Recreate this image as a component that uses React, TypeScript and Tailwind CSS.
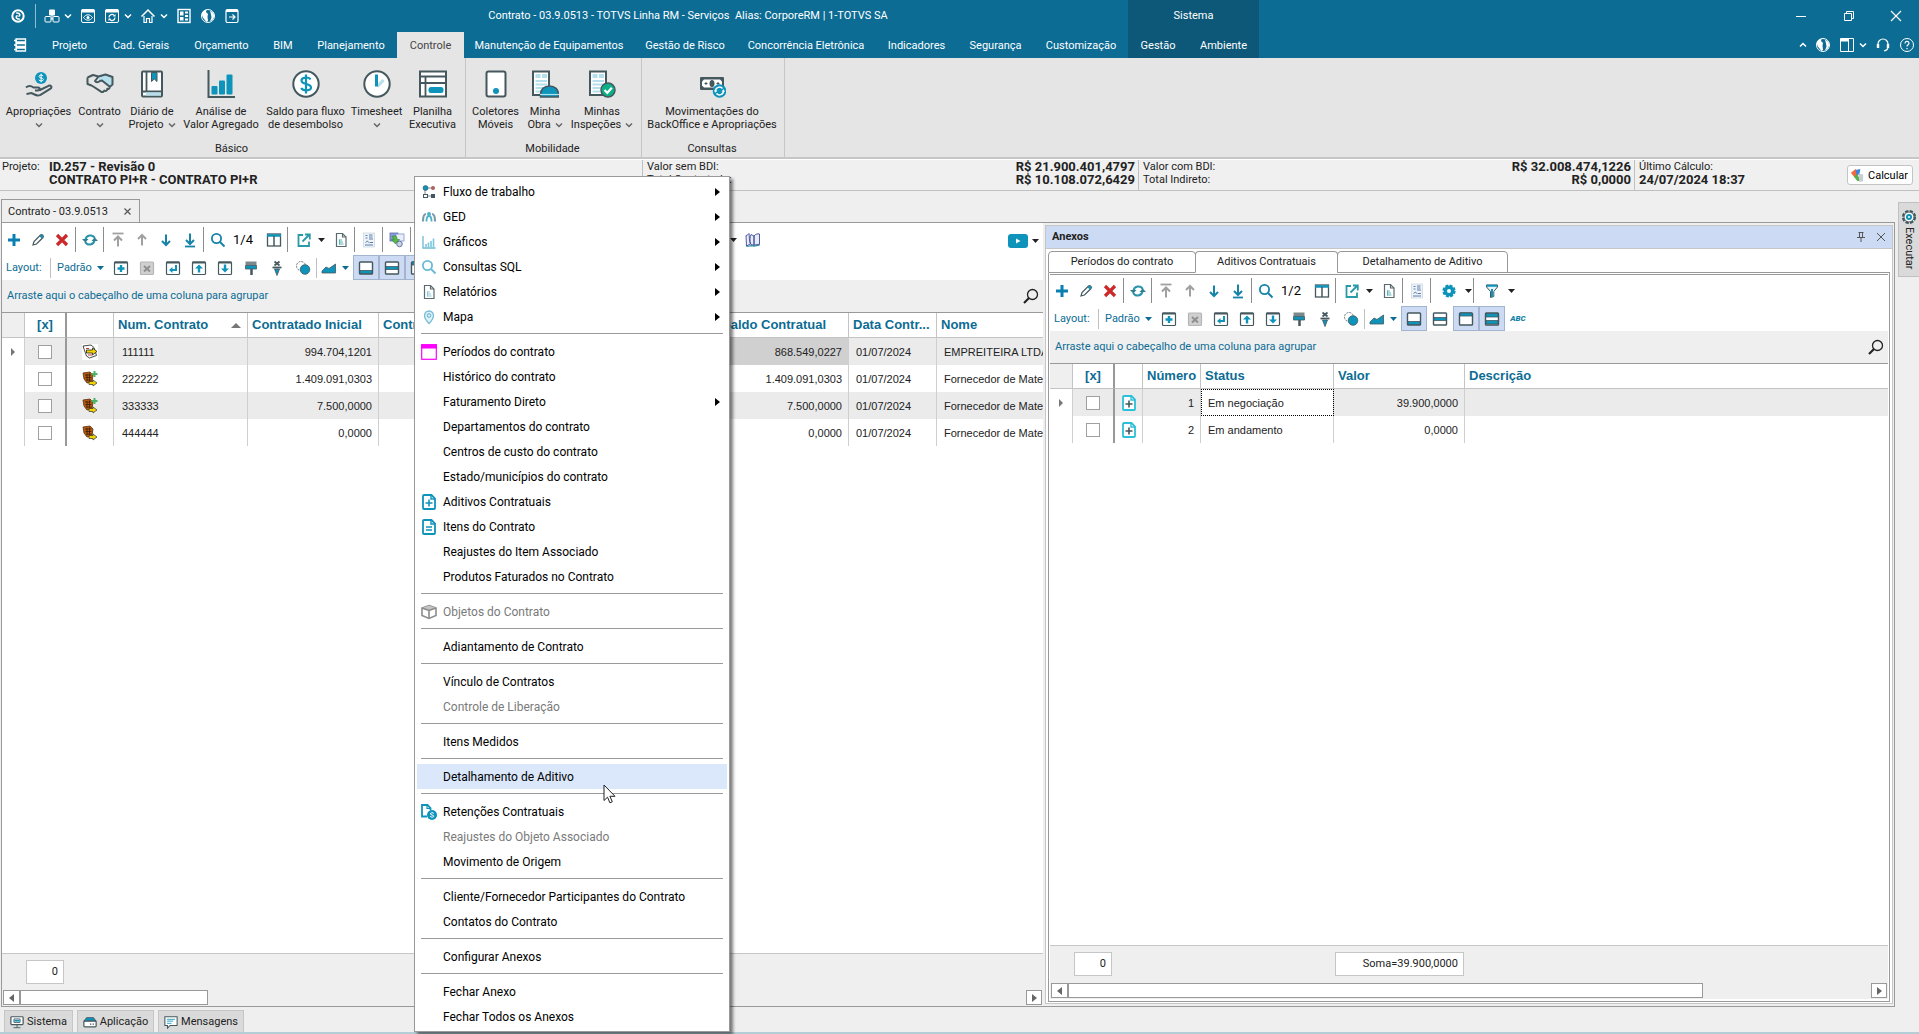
import type { ReactNode } from "react";
import clsx from "clsx";

const TEAL = "#0e93bb";
const DARK = "#44585e";
const GRAY = "#a0a0a0";

type SvgProps = { w?: number; h?: number; box?: string; children: ReactNode };

function Svg({ w = 16, h, box = "0 0 16 16", children }: SvgProps) {
  return (
    <svg width={w} height={h ?? w} viewBox={box} fill="none" className="shrink-0" aria-hidden="true">
      {children}
    </svg>
  );
}

/* ---------- Title bar icons ---------- */

const Chevron = ({ color = "#fff", up = false }: { color?: string; up?: boolean }) => (
  <Svg w={8} box="0 0 8 8">
    <path d={up ? "M1 5.5 4 2.5l3 3" : "M1 2.5 4 5.5l3-3"} stroke={color} strokeWidth="1.5" />
  </Svg>
);

const Caret = ({ color = "#222" }: { color?: string }) => (
  <Svg w={7} h={4} box="0 0 7 4">
    <path d="M0 0h7L3.5 4z" fill={color} />
  </Svg>
);

const LogoIcon = () => (
  <Svg>
    <circle cx="8" cy="8" r="5.7" stroke="#fff" strokeWidth="2" />
    <path d="M6.2 5.2c2-.8 3.6.6 3.6 1.8 0 .8-.6 1.3-1.5 1.3M9.800 10.800c-2 .8-3.600-.6-3.600-1.800 0-.8.6-1.300 1.500-1.300" stroke="#fff" strokeWidth="1.600" />
  </Svg>
);

const CubesIcon = () => (
  <Svg>
    <rect x="5" y="1.500" width="6" height="6" rx="1" fill="#fff" />
    <rect x="1" y="8.500" width="6" height="5.500" rx="1" stroke="#fff" />
    <rect x="9" y="8.500" width="6" height="5.500" rx="1" stroke="#fff" />
    <path d="M8 7v4M7 11h2" stroke="#fff" />
  </Svg>
);

const WindowFrame = ({ children }: { children: ReactNode }) => (
  <Svg>
    <rect x="1.500" y="1.500" width="13" height="13" rx="1.500" stroke="#fff" />
    <path d="M1.500 3h13" stroke="#fff" strokeWidth="3" />
    {children}
  </Svg>
);

const EyeWindowIcon = () => (
  <WindowFrame>
    <path d="M3.500 9.500c2.500-3.600 6.500-3.600 9 0-2.500 3.600-6.500 3.600-9 0z" stroke="#fff" />
    <circle cx="8" cy="9.500" r="1.500" fill="#fff" />
  </WindowFrame>
);

const RefreshWindowIcon = () => (
  <WindowFrame>
    <path d="M5 9.500a3 3 0 0 1 5.500-1.700M11 9.500a3 3 0 0 1-5.500 1.700" stroke="#fff" strokeWidth="1.200" />
    <path d="M9 8.500h2.500V6zM7 10.500H4.500V13z" fill="#fff" />
  </WindowFrame>
);

const HomeIcon = () => (
  <Svg>
    <path d="M1.500 8.500 8 2l6.500 6.500" stroke="#fff" strokeWidth="1.500" />
    <path d="M4 8v6.500h2.500v-4h3v4H12V8" stroke="#fff" strokeWidth="1.200" />
  </Svg>
);

const TilesIcon = () => (
  <Svg>
    <rect x="2" y="1.500" width="12" height="13" stroke="#fff" strokeWidth="1.400" />
    <path d="M4 3.500h3.500v4H4zM9 3.500h3v2H9zM9 7h3v2H9zM4 9h3.500v3.500H4zM9 10.500h3v2H9z" fill="#fff" />
  </Svg>
);

const GlobeIcon = () => (
  <Svg>
    <circle cx="8" cy="8" r="6.500" stroke="#fff" />
    <path d="M1.800 5c1-2 2.700-3 4.700-3.300L6 4l2 2-.5 2.500.5 4.500-1.500 1C5 12 1.500 9 1.800 5zM10 2.500 13.500 5c1.500 4-.5 7.500-3.500 8.500l1.500-4-.5-3z" fill="#fff" />
  </Svg>
);

const ExitIcon = () => (
  <Svg>
    <rect x="2" y="1.500" width="12" height="13" rx="1.500" stroke="#fff" strokeWidth="1.200" />
    <path d="M2 3h12" stroke="#fff" strokeWidth="2" />
    <path d="M5 9h6M8.500 6.500 11 9l-2.500 2.500" stroke="#fff" strokeWidth="1.200" />
  </Svg>
);

const MenuListIcon = () => (
  <Svg>
    <path d="M4 2h9.500v3H4zM4 6.500h9.500v3H4zM4 11h9.500v3H4z" stroke="#fff" strokeWidth="1.300" />
    <path d="M2 3.500h3M2 8h3M2 12.500h3" stroke="#fff" strokeWidth="1.300" />
  </Svg>
);

/* ---------- Ribbon icons (28px) ---------- */

const Big = ({ children }: { children: ReactNode }) => (
  <Svg w={28} box="0 0 28 28">{children}</Svg>
);

const HandCoinIcon = () => (
  <Big>
    <circle cx="16" cy="8" r="6" fill={TEAL} />
    <path d="M18.200 6c-.8-1.500-4.200-1.200-4.200.5 0 2 4.400 1 4.400 3 0 1.800-3.600 2-4.600.3M16.100 3.700v8.600" stroke="#fff" strokeWidth="1" />
    <path d="M1 17.500c3-2.500 5.500-1.500 7.500 0h4.500c2.500 0 2 3-.3 3H10M15 20l8.500-4.200c2.500-1 4 1.500 2 2.800L15.500 24.800c-2 1-4 .8-6-.3L6.500 23 1.500 24" stroke={DARK} strokeWidth="2" />
  </Big>
);

const HandshakeIcon = () => (
  <Big>
    <path d="M13 6.500 20 4.500l6.500 2.500v7l-3.500 2-7-5.500-3.500 1z" fill="#b5dfec" />
    <path d="M1.500 7.500 7 5l5.500 1.500 7-2 7 2.500v7.500L23.500 17M12.500 6.500 9 11c1 1.500 3 1.500 5 0l2-.5 7.500 6c.8 1.800-.8 2.800-2.200 2.200.3 2-1.500 2.800-3 1.800-.5 1.500-2 2-3.300 1.200L8 17l-2.500-1.500-4-1.500V7.500" stroke={DARK} strokeWidth="2" strokeLinejoin="round" />
  </Big>
);

const DiaryIcon = () => (
  <Big>
    <rect x="4" y="1.500" width="20" height="25" rx="1" fill="#fff" stroke={DARK} strokeWidth="2" />
    <path d="M8.500 2v19.500M4 21.500h20" stroke={DARK} strokeWidth="1.800" />
    <rect x="8" y="22.500" width="15" height="3" fill="#b5dfec" />
    <path d="M13.500 2.500h5.500v9l-2.700-2.500-2.800 2.500z" fill={TEAL} stroke={DARK} />
  </Big>
);

const BarsIcon = () => (
  <Big>
    <path d="M1.500 0v27H28" stroke={DARK} strokeWidth="2" />
    <rect x="4.500" y="16" width="6" height="8.500" rx="1" fill={TEAL} />
    <rect x="12" y="10.500" width="6" height="14" rx="1" fill={TEAL} />
    <rect x="19.500" y="4.500" width="6" height="20" rx="1" fill={TEAL} />
  </Big>
);

const DollarIcon = () => (
  <Big>
    <circle cx="14" cy="14" r="12.700" fill="#fff" stroke={DARK} strokeWidth="2" />
    <path d="M18.500 9.500c-1.500-3-9-2.500-9 1 0 4.500 9.500 2.500 9.500 7 0 3.500-8 4-9.800.5M14 4.500v19" stroke={TEAL} strokeWidth="2.200" />
  </Big>
);

const ClockIcon = () => (
  <Big>
    <circle cx="14" cy="14" r="12.700" fill="#fff" stroke={DARK} strokeWidth="2" />
    <path d="M14.500 16.500 20.500 10" stroke="#b5dfec" strokeWidth="3" />
    <path d="M13.500 4.500v12" stroke={TEAL} strokeWidth="3" />
  </Big>
);

const SheetIcon = () => (
  <Big>
    <rect x="1" y="1.500" width="26" height="25" fill="#fff" stroke={DARK} strokeWidth="2" />
    <path d="M1 6.500h26M1 13h26M6.500 6v20" stroke={DARK} strokeWidth="1.800" />
    <rect x="9.500" y="17" width="15" height="6" rx="2.500" fill={TEAL} />
  </Big>
);

const DeviceIcon = () => (
  <Big>
    <rect x="4.500" y="1.500" width="19" height="25" rx="2" fill="#fff" stroke={DARK} strokeWidth="2" />
    <circle cx="14" cy="21" r="3" fill={TEAL} />
  </Big>
);

const ReportBase = () => (
  <>
    <path d="M2 1.500h16V25H2z" fill="#fff" stroke={DARK} strokeWidth="2" />
    <path d="M4.500 4h5v4h-5zM11 4h5v4h-5z" fill="#b5dfec" />
    <path d="M4.500 11h11.500M4.500 14.500h11.500M4.500 18h9M4.500 21.500h8" stroke="#b5dfec" strokeWidth="1.800" />
  </>
);

const HelmetIcon = () => (
  <Big>
    <ReportBase />
    <path d="M9.500 24.500c0-5 3.500-8.500 9-8.500s9 3.500 9 8.500v2.500h-18z" fill={TEAL} stroke={DARK} strokeWidth="1.500" />
    <path d="M9 24.500h19" stroke="#b5dfec" strokeWidth="1.200" />
  </Big>
);

const InspectIcon = () => (
  <Big>
    <ReportBase />
    <circle cx="20" cy="20" r="7" fill="#0cb087" stroke={DARK} strokeWidth="1.500" />
    <path d="m16.500 20 2.800 2.800 4.500-5" stroke="#fff" strokeWidth="2.200" />
  </Big>
);

const CashIcon = () => (
  <Big>
    <rect x="2" y="7" width="24" height="13" rx="1" fill={DARK} />
    <path d="M6 9.500h16l2 2v4l-2 2H6l-2-2v-4z" fill="#fff" />
    <ellipse cx="14" cy="13.500" rx="2.500" ry="3.500" fill={DARK} />
    <path d="M6.500 13.500h3M8 12v3M18.500 13.500h3M20 12v3" stroke={DARK} />
    <circle cx="21.500" cy="21" r="6.800" fill={TEAL} />
    <path d="M17.500 21a4 4 0 0 1 7-2.500M25.500 21a4 4 0 0 1-7 2.500" stroke="#fff" strokeWidth="1.500" />
    <path d="M15.800 20.500h3.600l-1.800 2.300zM23.600 21.500h3.600l-1.800-2.300z" fill="#fff" />
  </Big>
);

/* ---------- Toolbar icons ---------- */

const PlusIcon = () => (
  <Svg>
    <path d="M8 2v12M2 8h12" stroke="#0b7fb0" strokeWidth="3" />
  </Svg>
);

const PencilIcon = () => (
  <Svg>
    <path d="m3 13 1-3.500L10.500 3c1.500-1.200 3.700 1 2.500 2.500L6.500 12z" stroke={DARK} strokeWidth="1.200" />
    <path d="m10.500 3.500 2.200 2.200" stroke={TEAL} strokeWidth="2.500" />
  </Svg>
);

const DeleteIcon = () => (
  <Svg>
    <path d="m3 3 10 10M13 3 3 13" stroke="#cc2a2a" strokeWidth="3.200" />
  </Svg>
);

const RefreshIcon = () => (
  <Svg>
    <path d="M3.500 7.500a5 5 0 0 1 9.300-1.500M12.500 8.500a5 5 0 0 1-9.300 1.500" stroke="#2b93ab" strokeWidth="2" />
    <path d="M0 7h6.500l-3.200 3.500zM16 9H9.500l3.200-3.500z" fill="#2b7f8f" />
  </Svg>
);

const UpIcon = ({ bar = false }: { bar?: boolean }) => (
  <Svg>
    {bar && <path d="M2.500 1.500h11" stroke={GRAY} strokeWidth="1.800" />}
    <path d={bar ? "M8 14.500V5M4 8.500l4-4 4 4" : "M8 13.500V3.500M4 7l4-4 4 4"} stroke={GRAY} strokeWidth="2" />
  </Svg>
);

const DownIcon = ({ bar = false }: { bar?: boolean }) => (
  <Svg>
    {bar && <path d="M3 14.500h10" stroke="#1683a8" strokeWidth="1.800" />}
    <path d={bar ? "M8 1.500v10M4 8l4 4 4-4" : "M8 2.500v10M4 9l4 4 4-4"} stroke="#1683a8" strokeWidth="2" />
  </Svg>
);

const SearchIcon = ({ color = "#1683a8" }: { color?: string }) => (
  <Svg>
    <circle cx="6.500" cy="6.500" r="4.600" stroke={color} strokeWidth="1.800" />
    <path d="m10 10 4.500 4.500" stroke={color} strokeWidth="2" />
  </Svg>
);

const ColumnsIcon = () => (
  <Svg>
    <rect x="1.500" y="2" width="13" height="12" fill="#fff" stroke={DARK} strokeWidth="1.300" />
    <path d="M1 3.500h14" stroke={TEAL} strokeWidth="2.500" />
    <path d="M8 4v10" stroke={DARK} strokeWidth="1.500" />
  </Svg>
);

const ExportIcon = () => (
  <Svg>
    <path d="M7 3H2.500v11h10.500V9.500" stroke="#2b9aa8" strokeWidth="1.800" />
    <path d="M6.500 9.500 13.500 2.500M9 2.500h4.800v5" stroke="#2b9aa8" strokeWidth="1.800" />
  </Svg>
);

const DocIcon = ({ lines = "#5bb3b8" }: { lines?: string }) => (
  <Svg>
    <path d="M3.500 1.500h6l3.500 3.500v9.500H3.500z" fill="#fff" stroke="#5a6b70" strokeWidth="1.200" />
    <path d="M9.500 1.500V5H13" stroke="#5a6b70" strokeWidth="1.200" />
    <path d="M6 8h3M6 10h4M6 12h4.500M6.500 7.500v5" stroke={lines} />
  </Svg>
);

const ListDocIcon = () => (
  <Svg>
    <rect x="2.500" y="1" width="11" height="14" fill="#eef3f9" stroke="#cfd8e2" strokeWidth=".8" />
    <path d="M4.500 3.500h2M4.500 6h2M8 3h3.500M8 5h3.500M8 7h4M4.500 10.500l2-1.500 1 1.500M8.500 10.500h3.500M4 13h8" stroke="#5b7fae" />
  </Svg>
);

const ExchangeIcon = () => (
  <Svg>
    <rect x="1" y="1" width="8" height="8" fill="#8a9bd8" stroke="#5a6ab0" strokeWidth=".8" />
    <rect x="7" y="2" width="8" height="7" fill="#e9eefb" stroke="#7f95c8" strokeWidth=".8" />
    <path d="M3 4.500c2-1.500 5-1 5 2v1h2.500L6.500 12 2.500 7.500H5z" fill="#55b848" stroke="#2f8530" strokeWidth=".6" />
    <circle cx="10.500" cy="12" r="2.800" fill="#c9d2e6" stroke="#4f5f94" strokeWidth=".8" />
  </Svg>
);

const GearIcon = () => (
  <Svg>
    <circle cx="8" cy="8" r="5.400" fill={TEAL} stroke={TEAL} strokeWidth="2.400" strokeDasharray="2.800 1.440" />
    <circle cx="8" cy="8" r="2" fill="#fff" />
  </Svg>
);

const FilterIcon = () => (
  <Svg>
    <path d="M2.500 2h11v2L9.800 8.500v5L6.500 14.500v-6L2.500 4z" stroke={DARK} fill="#e9f5f9" />
    <path d="M2.500 2.700h11M8 6v8" stroke={TEAL} strokeWidth="2" />
  </Svg>
);

const BookIcon = () => (
  <Svg>
    <path d="M1 3.500c1.500 0 2-1 3-2 .5 3 0 7 1.500 10.500L1.500 14zM5.500 12C4.500 8.500 5 5 6 2.500L9 4v9.500zM9 4c1.500-2 3.500-2.500 5.500-2v10.500c-2-.3-4 0-5.500 1z" fill="#e8ebf8" stroke="#3d4a9a" strokeWidth=".9" />
    <path d="m1.500 14.500 5-.8 2.500.5 5.500-1" stroke="#2f8f9a" strokeWidth="1.200" />
  </Svg>
);

const BoxIcon = ({ children }: { children: ReactNode }) => (
  <Svg>
    <rect x="1.500" y="2" width="13" height="12.500" rx="1" fill="#fff" stroke={DARK} strokeWidth="1.200" />
    <path d="M1.500 2.500h13" stroke={DARK} strokeWidth="2" />
    {children}
  </Svg>
);

const AddLayoutIcon = () => <BoxIcon><path d="M8 5v7M4.500 8.500h7" stroke={TEAL} strokeWidth="2.400" /></BoxIcon>;
const EnterIcon = () => <BoxIcon><path d="M11 5v5H6" stroke={TEAL} strokeWidth="2" /><path d="M7.500 7v6L4 10z" fill={TEAL} /></BoxIcon>;
const UploadIcon = () => <BoxIcon><path d="M8 12.500V7" stroke={TEAL} strokeWidth="2.400" /><path d="M4 8.500 8 4.500l4 4z" fill={TEAL} /></BoxIcon>;
const DownloadIcon = () => <BoxIcon><path d="M8 4.500V9" stroke={TEAL} strokeWidth="2.400" /><path d="m4 8.500 4 4 4-4z" fill={TEAL} /></BoxIcon>;

const RemoveLayoutIcon = () => (
  <Svg>
    <rect x="1.500" y="2" width="13" height="12.500" rx="1" fill="#d0d0d0" stroke="#b5b5b5" strokeWidth="1.200" />
    <path d="m5 6 6 5.500M11 6l-6 5.500" stroke="#8f8f8f" strokeWidth="2" />
  </Svg>
);

const BrushIcon = () => (
  <Svg>
    <path d="M2.500 1.500h11v4h-11z" fill="#7b898d" />
    <path d="M2.500 5.500h11V9h-11z" fill={TEAL} stroke={DARK} strokeWidth=".8" />
    <path d="M8.500 9v6" stroke={DARK} strokeWidth="2.500" />
  </Svg>
);

const SwordIcon = () => (
  <Svg>
    <path d="m5.500 1.500 5 4M10.500 1.500l-5 4" stroke={DARK} strokeWidth="1.800" />
    <path d="M3.500 7.500h9" stroke={DARK} strokeWidth="1.800" />
    <path d="M5.500 9h5L8 15.500z" fill={TEAL} stroke={DARK} strokeWidth=".8" />
  </Svg>
);

const ShapesIcon = () => (
  <Svg>
    <circle cx="6" cy="6" r="4.500" stroke="#6b7a7f" strokeDasharray="2 1" />
    <circle cx="10" cy="9.500" r="4.800" fill={TEAL} stroke={DARK} strokeWidth=".8" />
  </Svg>
);

const AreaIcon = () => (
  <Svg>
    <path d="M1 13V11l4-4 3 1.500L14.500 4v9z" fill={TEAL} stroke={DARK} strokeWidth=".8" />
  </Svg>
);

const Panel = ({ fill }: { fill: string }) => (
  <Svg>
    <rect x="1.500" y="2" width="13" height="12" rx=".8" fill="#fff" stroke={DARK} strokeWidth="1.400" />
    <path d={fill} fill={TEAL} stroke={DARK} strokeWidth=".8" />
  </Svg>
);

const PANEL_BOTTOM = "M2 10.500h12v3H2z";
const PANEL_MIDDLE = "M2 6.500h12v3H2z";
const PANEL_TOP = "M2 2h12v3H2z";
const PANEL_BOTH = "M2 2.500h12v3.500H2zM2 9.500h12v3.500H2z";

/* ---------- Menu and grid icons ---------- */

const FlowIcon = () => (
  <Svg>
    <path d="M5 4h7M4 5v7h8" stroke="#7f8f94" />
    <circle cx="4.500" cy="4" r="2.500" fill={TEAL} stroke={DARK} strokeWidth=".6" />
    <circle cx="12" cy="4" r="2" fill="#a8645c" />
    <rect x="2.500" y="10.500" width="4" height="3" fill="#fff" stroke={DARK} />
    <rect x="10" y="10" width="4" height="4" fill={DARK} />
  </Svg>
);

const GedIcon = () => (
  <Svg>
    <path d="M2 12.500c0-4.500 1-7.500 3-7.500M14 12.500c0-4.500-1-7.500-3-7.500" stroke="#7a9ba6" strokeWidth="2.200" />
    <path d="M5.500 12.500c0-3 .8-5.500 2.500-5.500s2.500 2.500 2.500 5.500" stroke="#4fb0cb" strokeWidth="1.800" />
    <circle cx="8" cy="5" r="2" fill="#4fb0cb" />
  </Svg>
);

const ChartIcon = () => (
  <Svg>
    <path d="M2 2v12h12.500" stroke="#6cb9d2" strokeWidth="1.300" />
    <path d="M5 13v-3M7.500 13V8.500M10 13V7M12.500 13V4.500" stroke="#7cc6dc" strokeWidth="1.600" />
  </Svg>
);

const PinIcon = () => (
  <Svg>
    <path d="M8 14.500C5 11.500 3.500 9 3.500 6.500a4.500 4.500 0 0 1 9 0c0 2.500-1.500 5-4.500 8z" fill="#dff1f8" stroke="#76bcd4" strokeWidth="1.300" />
    <circle cx="8" cy="6.500" r="1.800" stroke="#5aaecb" />
  </Svg>
);

const PeriodIcon = () => (
  <Svg>
    <rect x=".7" y=".7" width="14.600" height="14.600" fill="#fff" stroke="#ff00ff" strokeWidth="1.200" />
    <path d="M0 2.500h16" stroke="#ff00ff" strokeWidth="4" />
  </Svg>
);

const PageIcon = ({ d, tone = TEAL, mark = TEAL }: { d: string; tone?: string; mark?: string }) => (
  <Svg>
    <path d="M3 1h7.500L14 4.500V14a1 1 0 0 1-1 1H3a1 1 0 0 1-1-1V2a1 1 0 0 1 1-1z" fill="#fff" stroke={tone} strokeWidth="1.800" />
    <path d="M10 1v4h4" stroke={tone} strokeWidth="1.400" />
    <path d={d} stroke={mark} strokeWidth="1.600" />
  </Svg>
);

const PAGE_PLUS = "M8 5.500v7M4.500 9h7";
const PAGE_LINES = "M5 8h6M5 11h6";

const ObjectIcon = () => (
  <Svg>
    <path d="M8 1.500 15 4v7.500L8 14.500 1 11.500V4z" fill="#fff" stroke="#8c8c8c" strokeWidth="1.600" />
    <path d="M1 4l7-2.500L15 4 8 6.500z" fill="#c4c4c4" />
    <path d="M1 4l7 2.500L15 4M8 6.500v8" stroke="#8c8c8c" strokeWidth="1.600" />
  </Svg>
);

const RetentionIcon = () => (
  <Svg>
    <path d="M6 12.500H1V1h5.500L9.500 4v2" stroke={TEAL} strokeWidth="1.800" />
    <path d="M6 1v3.500h3.500" stroke={TEAL} strokeWidth="1.200" />
    <circle cx="11" cy="11" r="5" fill={TEAL} />
    <path d="M12.800 9.500c-.6-1.200-3.400-1-3.400.4 0 1.600 3.400.7 3.400 2.200 0 1.400-3 1.500-3.600.2" stroke="#fff" />
  </Svg>
);

const NegotiatingIcon = () => (
  <Svg>
    <rect width="16" height="16" fill="#fff" />
    <path d="m1 2 8-1 3 2.500 2.500 8-7 2.500L4.500 12z" fill="#fff" stroke="#333" strokeWidth=".9" />
    <path d="M4 4.500h3M6 11h4" stroke="#c0392b" />
    <path d="M4.500 6h6V4l4.500 3.500-4.500 3.500V9h-6z" fill="#f3d400" stroke="#222" strokeWidth=".8" />
  </Svg>
);

const ContractIcon = ({ added }: { added: boolean }) => (
  <Svg>
    <path d="m1 2 7-1 3 3-1 7-5 1-3-4z" fill="#b45a12" stroke="#5a2c08" strokeWidth=".8" />
    <path d="M3 4h6M3.500 6.500h6M4.500 9h5M5 3v7M7.500 2.500v8" stroke="#3c1c04" strokeWidth=".8" />
    <path d="M7 10.500h4V9l4 3-4 3v-1.500H7z" fill="#f3d400" stroke="#333" strokeWidth=".7" />
    {added && <path d="M12.500 0v6M9.500 3h6" stroke="#4db36b" strokeWidth="2" />}
  </Svg>
);

/* ---------- Ribbon ---------- */

const tabs: [string, string][] = [
  ["Projeto", "w-[61px]"],
  ["Cad. Gerais", "w-[82px]"],
  ["Orçamento", "w-[79px]"],
  ["BIM", "w-[44px]"],
  ["Planejamento", "w-[92px]"],
  ["Controle", "w-[67px]"],
  ["Manutenção de Equipamentos", "w-[170px]"],
  ["Gestão de Risco", "w-[102px]"],
  ["Concorrência Eletrônica", "w-[140px]"],
  ["Indicadores", "w-[81px]"],
  ["Segurança", "w-[77px]"],
  ["Customização", "w-[94px]"],
];

function TitleButton({ label, children, className = "w-7" }: { label: string; children: ReactNode; className?: string }) {
  return (
    <button type="button" aria-label={label} className={clsx("flex h-full shrink-0 items-center justify-center gap-1", className)}>
      {children}
    </button>
  );
}

function TitleBar() {
  return (
    <header className="flex h-[58px] shrink-0 bg-[#0c6c94] text-white">
      <div className="flex w-[1128px] flex-col">
        <div className="flex h-8 items-center">
          <TitleButton label="TOTVS" className="w-[35px]"><LogoIcon /></TitleButton>
          <span className="mr-2 h-6 w-px bg-[#8fbdd0]" />
          <TitleButton label="Coligadas"><CubesIcon /><Chevron /></TitleButton>
          <TitleButton label="Visualizar" className="w-8"><EyeWindowIcon /></TitleButton>
          <TitleButton label="Atualizar" className="mr-2 w-7"><RefreshWindowIcon /><Chevron /></TitleButton>
          <TitleButton label="Início"><HomeIcon /><Chevron /></TitleButton>
          <TitleButton label="Painéis" className="w-8"><TilesIcon /></TitleButton>
          <TitleButton label="Portal" className="w-4"><GlobeIcon /></TitleButton>
          <TitleButton label="Sair" className="w-8"><ExitIcon /></TitleButton>
          <h1 className="flex-1 text-center whitespace-pre">
            {"Contrato - 03.9.0513 - TOTVS Linha RM - Serviços  Alias: CorporeRM | 1-TOTVS SA"}
          </h1>
        </div>
        <nav className="flex h-[26px]">
          <button type="button" aria-label="Menu" className="flex w-[39px] items-center justify-center"><MenuListIcon /></button>
          {tabs.map(([name, width]) => (
            <button
              key={name}
              type="button"
              className={clsx(width, "shrink-0 pt-px text-center whitespace-nowrap", name === "Controle" && "bg-[#e5e5e5] text-[#444]")}
            >
              {name}
            </button>
          ))}
        </nav>
      </div>
      <div className="flex w-[131px] flex-col bg-[#0d5878]">
        <div className="flex h-8 items-center justify-center">Sistema</div>
        <div className="flex h-[26px]">
          <button type="button" className="w-[60px] pt-px">Gestão</button>
          <button type="button" className="w-[71px] pt-px">Ambiente</button>
        </div>
      </div>
      <div className="flex flex-1 flex-col items-end">
        <div className="flex h-8">
          <TitleButton label="Minimizar" className="w-12">
            <Svg w={12} box="0 0 12 12"><path d="M1 6.500h10" stroke="#fff" /></Svg>
          </TitleButton>
          <TitleButton label="Restaurar" className="w-12">
            <Svg w={12} box="0 0 12 12"><path d="M1.500 3.500h7v7h-7zM3.500 3.500v-2h7v7h-2" stroke="#fff" /></Svg>
          </TitleButton>
          <TitleButton label="Fechar" className="w-[46px]">
            <Svg w={12} box="0 0 12 12"><path d="m1 1 10 10M11 1 1 11" stroke="#fff" strokeWidth="1.200" /></Svg>
          </TitleButton>
        </div>
        <div className="flex h-[26px] items-center">
          <TitleButton label="Recolher" className="mr-2 w-2"><Chevron up /></TitleButton>
          <TitleButton label="Portal" className="mr-2 w-4"><GlobeIcon /></TitleButton>
          <TitleButton label="Janelas" className="mr-1 w-7">
            <Svg>
              <path d="M1.500 1.500h13v13h-13zM9.500 2v12" stroke="#fff" />
              <path d="M2 3h8" stroke="#fff" strokeWidth="3" />
            </Svg>
            <Chevron />
          </TitleButton>
          <TitleButton label="Suporte" className="w-6">
            <Svg>
              <path d="M3 10V7a5 5 0 0 1 10 0v3c0 2-2 3.500-4 4" stroke="#fff" strokeWidth="1.200" />
              <path d="M3 7v4M13 7v4" stroke="#fff" strokeWidth="2.400" />
            </Svg>
          </TitleButton>
          <TitleButton label="Ajuda" className="w-6">
            <Svg>
              <circle cx="8" cy="8" r="6.500" stroke="#fff" />
              <path d="M6 6.500c0-3 4-2.500 4-.2 0 1.500-2 1.500-2 3.200M8 11v1.300" stroke="#fff" strokeWidth="1.200" />
            </Svg>
          </TitleButton>
        </div>
      </div>
    </header>
  );
}

type RibbonItem = { lines: [string, string?]; width: string; icon: ReactNode; chevron?: boolean };

const ribbon: { name: string; width: string; items: RibbonItem[] }[] = [
  {
    name: "Básico",
    width: "w-[466px]",
    items: [
      { lines: ["Apropriações"], width: "w-[70px]", icon: <HandCoinIcon />, chevron: true },
      { lines: ["Contrato"], width: "w-[52px]", icon: <HandshakeIcon />, chevron: true },
      { lines: ["Diário de", "Projeto"], width: "w-[53px]", icon: <DiaryIcon />, chevron: true },
      { lines: ["Análise de", "Valor Agregado"], width: "w-[85px]", icon: <BarsIcon /> },
      { lines: ["Saldo para fluxo", "de desembolso"], width: "w-[84px]", icon: <DollarIcon /> },
      { lines: ["Timesheet"], width: "w-[58px]", icon: <ClockIcon />, chevron: true },
      { lines: ["Planilha", "Executiva"], width: "w-[54px]", icon: <SheetIcon /> },
    ],
  },
  {
    name: "Mobilidade",
    width: "w-[176px]",
    items: [
      { lines: ["Coletores", "Móveis"], width: "w-[52px]", icon: <DeviceIcon /> },
      { lines: ["Minha", "Obra"], width: "w-[47px]", icon: <HelmetIcon />, chevron: true },
      { lines: ["Minhas", "Inspeções"], width: "w-[67px]", icon: <InspectIcon />, chevron: true },
    ],
  },
  {
    name: "Consultas",
    width: "w-[143px]",
    items: [{ lines: ["Movimentações do", "BackOffice e Apropriações"], width: "w-[132px]", icon: <CashIcon /> }],
  },
];

function Ribbon() {
  return (
    <div className="flex h-[101px] shrink-0 border-b-2 border-[#c6c6c6] bg-[#e5e5e5]">
      {ribbon.map((group) => (
        <section key={group.name} className={clsx(group.width, "flex flex-col border-r border-[#c6c6c6] pr-[2px]")}>
          <div className="flex h-[84px] justify-center">
            {group.items.map((item) => (
              <button
                key={item.lines[0]}
                type="button"
                className={clsx(item.width, "flex shrink-0 flex-col items-center pt-3 leading-[13px] whitespace-nowrap")}
              >
                <span className="mb-[7px]">{item.icon}</span>
                <span>{item.lines[0]}</span>
                <span className="flex h-[13px] items-center gap-1">
                  {item.lines[1]}
                  {item.chevron && <Chevron color="#666" />}
                </span>
              </button>
            ))}
          </div>
          <h2 className="text-center leading-[14px]">{group.name}</h2>
        </section>
      ))}
    </div>
  );
}

function Totals({ rows }: { rows: [string, string][] }) {
  return (
    <dl className="flex flex-col pr-[3px] pl-1">
      {rows.map(([label, value]) => (
        <div key={label} className="flex justify-between">
          <dt>{label}</dt>
          <dd className="text-[13px] font-bold">{value}</dd>
        </div>
      ))}
    </dl>
  );
}

function ProjectBar() {
  return (
    <div className="grid h-8 shrink-0 grid-cols-[643fr_496fr_496fr_284fr] divide-x divide-[#c0c0c0] border-y border-t-white border-b-[#c0c0c0] bg-[#f0f0f0] leading-[13px]">
      <div className="flex">
        <span className="w-[49px] pl-[2px]">Projeto:</span>
        <p className="text-[13px] font-bold">
          ID.257 - Revisão 0<br />CONTRATO PI+R - CONTRATO PI+R
        </p>
      </div>
      <Totals rows={[["Valor sem BDI:", "R$ 21.900.401,4797"], ["Total Contratado:", "R$ 10.108.072,6429"]]} />
      <Totals rows={[["Valor com BDI:", "R$ 32.008.474,1226"], ["Total Indireto:", "R$ 0,0000"]]} />
      <div className="flex items-start justify-between pr-[6px] pl-1">
        <div>
          <p>Último Cálculo:</p>
          <p className="text-[13px] font-bold">24/07/2024 18:37</p>
        </div>
        <button type="button" className="flex h-5 w-[66px] items-center gap-[3px] self-center rounded-[3px] border border-[#c4c4c4] bg-white pl-[2px] text-black">
          <Svg w={15}>
            <path d="m1 5 5-4 3 6-4 3z" fill="#f06a3a" />
            <path d="m6 2 5-1-1 6-3 1z" fill="#3b86d8" />
            <path d="m4 9 4-2 3 6-3 1z" fill="#57b04a" />
            <path d="m9 6 5 1v7l-4 1z" fill="#c7cdd4" />
          </Svg>
          Calcular
        </button>
      </div>
    </div>
  );
}

/* ---------- Grids ---------- */

const Tool = ({ label, children, className = "w-6" }: { label: string; children: ReactNode; className?: string }) => (
  <button type="button" aria-label={label} className={clsx(className, "flex shrink-0 items-center justify-center")}>
    {children}
  </button>
);

const Sep = () => <span className="mr-[2px] ml-px h-[25px] w-px shrink-0 bg-[#8c8c8c]" />;

function MainToolbar({ page, children }: { page: string; children: ReactNode }) {
  return (
    <div className="flex h-[31px] items-center overflow-hidden">
      <Tool label="Incluir"><PlusIcon /></Tool>
      <Tool label="Editar"><PencilIcon /></Tool>
      <Tool label="Excluir"><DeleteIcon /></Tool>
      <Sep />
      <Tool label="Atualizar"><RefreshIcon /></Tool>
      <Sep />
      <Tool label="Primeiro"><UpIcon bar /></Tool>
      <Tool label="Anterior"><UpIcon /></Tool>
      <Tool label="Próximo"><DownIcon /></Tool>
      <Tool label="Último"><DownIcon bar /></Tool>
      <Sep />
      <Tool label="Localizar"><SearchIcon /></Tool>
      <span className="w-8 shrink-0 pl-[3px] text-[13px] text-black">{page}</span>
      <Tool label="Colunas"><ColumnsIcon /></Tool>
      <Sep />
      <Tool label="Exportar" className="w-7"><ExportIcon /></Tool>
      <Caret />
      <Tool label="Documento" className="ml-1 w-6"><DocIcon /></Tool>
      <Sep />
      <Tool label="Relatório"><ListDocIcon /></Tool>
      <Sep />
      {children}
    </div>
  );
}

function LayoutToolbar({ pressed, children }: { pressed: boolean[]; children?: ReactNode }) {
  const panels: [string, string][] = [
    ["Rodapé", PANEL_BOTTOM],
    ["Linhas", PANEL_MIDDLE],
    ["Agrupamento", PANEL_TOP],
    ["Faixas", PANEL_BOTH],
  ];
  return (
    <div className="flex h-[25px] items-center overflow-hidden text-[#0c6c94]">
      <span className="w-12 shrink-0 pl-1">Layout:</span>
      <span className="h-5 w-px shrink-0 bg-[#c0c0c0]" />
      <button type="button" className="flex w-[57px] shrink-0 items-center gap-[5px] pl-[6px]">
        Padrão <Caret color="#0c6c94" />
      </button>
      <Tool label="Novo layout" className="w-[26px]"><AddLayoutIcon /></Tool>
      <Tool label="Excluir layout" className="w-[26px]"><RemoveLayoutIcon /></Tool>
      <Tool label="Restaurar layout" className="w-[26px]"><EnterIcon /></Tool>
      <Tool label="Exportar layout" className="w-[26px]"><UploadIcon /></Tool>
      <Tool label="Importar layout" className="w-[26px]"><DownloadIcon /></Tool>
      <Tool label="Formatar" className="w-[26px]"><BrushIcon /></Tool>
      <Tool label="Limpar formatação" className="w-[26px]"><SwordIcon /></Tool>
      <Tool label="Cores" className="w-[26px]"><ShapesIcon /></Tool>
      <span className="h-5 w-px shrink-0 bg-[#c0c0c0]" />
      <Tool label="Gráfico" className="w-[36px] gap-[5px]"><AreaIcon /><Caret color="#0c6c94" /></Tool>
      {panels.map(([label, fill], i) => (
        <Tool
          key={label}
          label={label}
          className={clsx("h-[25px] w-[26px]", pressed[i] && "border border-[#a3b4cf] bg-[#cddaf3]")}
        >
          <Panel fill={fill} />
        </Tool>
      ))}
      {children}
    </div>
  );
}

function GroupBand() {
  return (
    <div className="flex h-8 shrink-0 items-center justify-between bg-[#efefef] pr-1 pl-[5px] text-[#0c6c94]">
      <span>Arraste aqui o cabeçalho de uma coluna para agrupar</span>
      <button type="button" aria-label="Pesquisar">
        <Svg>
          <circle cx="9.500" cy="6.500" r="5" stroke="#222" strokeWidth="1.300" />
          <path d="M6 10 1 15" stroke="#222" strokeWidth="2.200" />
        </Svg>
      </button>
    </div>
  );
}

const th = "h-[25px] border-r border-b border-[#c4c4c4] px-1 text-[13px] font-bold whitespace-nowrap";
const td = "h-[27px] border-r border-[#cfcfcf] overflow-hidden whitespace-nowrap";

const Marker = () => (
  <Svg w={6} h={8} box="0 0 6 8"><path d="M1 0v8l4-4z" fill="#777" /></Svg>
);

function LeadHeaders() {
  return (
    <>
      <th className={clsx(th, "border-[#999] bg-[#efefef]")} />
      <th className={clsx(th, "border-r-2 border-r-[#999] text-center")}>[x]</th>
      <th className={th} />
    </>
  );
}

function LeadCells({ first, id, icon }: { first: boolean; id: string; icon: ReactNode }) {
  return (
    <>
      <td className={clsx(td, "bg-white")}>
        <span className="flex justify-center">{first && <Marker />}</span>
      </td>
      <td className={clsx(td, "border-r-2 border-r-[#999]")}>
        <input
          type="checkbox"
          aria-label={`Selecionar ${id}`}
          className="mx-auto block size-[14px] appearance-none border border-[#a0a0a0] bg-white"
        />
      </td>
      <td className={td}><span className="flex justify-center">{icon}</span></td>
    </>
  );
}

const contracts = [
  { num: "111111", inicial: "994.704,1201", saldo: "868.549,0227", data: "01/07/2024", nome: "EMPREITEIRA LTDA", icon: <NegotiatingIcon /> },
  { num: "222222", inicial: "1.409.091,0303", saldo: "1.409.091,0303", data: "01/07/2024", nome: "Fornecedor de Materi", icon: <ContractIcon added /> },
  { num: "333333", inicial: "7.500,0000", saldo: "7.500,0000", data: "01/07/2024", nome: "Fornecedor de Materi", icon: <ContractIcon added /> },
  { num: "444444", inicial: "0,0000", saldo: "0,0000", data: "01/07/2024", nome: "Fornecedor de Materi", icon: <ContractIcon added={false} /> },
];

function ContractTable() {
  return (
    <table className="w-full table-fixed border-separate border-spacing-0 border-t border-[#999] font-['Liberation_Sans',sans-serif]">
      <colgroup>
        <col className="w-[23px]" />
        <col className="w-[42px]" />
        <col className="w-[47px]" />
        <col className="w-[134px]" />
        <col className="w-[131px]" />
        <col className="w-[339px]" />
        <col className="w-[131px]" />
        <col className="w-[88px]" />
        <col />
      </colgroup>
      <thead className="text-left text-[#0c6c94]">
        <tr>
          <LeadHeaders />
          <th className={th}>
            <span className="flex items-center justify-between pr-[2px]">
              Num. Contrato
              <Svg w={10} h={5} box="0 0 10 5"><path d="M0 5h10L5 0z" fill="#777" /></Svg>
            </span>
          </th>
          <th className={th}>Contratado Inicial</th>
          <th className={th}>Contratado</th>
          <th className={th}>Saldo Contratual</th>
          <th className={th}>Data Contr...</th>
          <th className={clsx(th, "border-r-0")}>Nome</th>
        </tr>
      </thead>
      <tbody>
        {contracts.map((c, i) => (
          <tr key={c.num} className={i % 2 === 0 ? "bg-[#ebebeb]" : "bg-white"}>
            <LeadCells first={i === 0} id={c.num} icon={c.icon} />
            <td className={clsx(td, "pl-2")}>{c.num}</td>
            <td className={clsx(td, "pr-[6px] text-right")}>{c.inicial}</td>
            <td className={td} />
            <td className={clsx(td, "pr-[6px] text-right", i === 0 && "bg-[#d0d0d0]")}>{c.saldo}</td>
            <td className={clsx(td, "pl-[7px]")}>{c.data}</td>
            <td className={clsx(td, "border-r-0 pl-[7px]")}>{c.nome}</td>
          </tr>
        ))}
      </tbody>
    </table>
  );
}

const addenda = [
  { num: "1", status: "Em negociação", valor: "39.900,0000" },
  { num: "2", status: "Em andamento", valor: "0,0000" },
];

function AddendumTable() {
  return (
    <table className="w-full table-fixed border-separate border-spacing-0 border-t border-[#999] font-['Liberation_Sans',sans-serif]">
      <colgroup>
        <col className="w-[23px]" />
        <col className="w-[42px]" />
        <col className="w-[28px]" />
        <col className="w-[58px]" />
        <col className="w-[133px]" />
        <col className="w-[131px]" />
        <col />
      </colgroup>
      <thead className="text-left text-[#0c6c94]">
        <tr>
          <LeadHeaders />
          <th className={th}>Número</th>
          <th className={th}>Status</th>
          <th className={th}>Valor</th>
          <th className={clsx(th, "border-r-0")}>Descrição</th>
        </tr>
      </thead>
      <tbody>
        {addenda.map((a, i) => (
          <tr key={a.num} className={i % 2 === 0 ? "bg-[#ebebeb]" : "bg-white"}>
            <LeadCells first={i === 0} id={a.num} icon={<PageIcon d={PAGE_PLUS} tone="#2cc0d8" mark={DARK} />} />
            <td className={clsx(td, "pr-[6px] text-right")}>{a.num}</td>
            <td className={clsx(td, "pl-[7px]", i === 0 && "bg-white outline outline-dotted -outline-offset-1 outline-black")}>{a.status}</td>
            <td className={clsx(td, "pr-[6px] text-right")}>{a.valor}</td>
            <td className={clsx(td, "border-r-0")} />
          </tr>
        ))}
      </tbody>
    </table>
  );
}

function ScrollBar({ thumb }: { thumb: string }) {
  return (
    <div className="flex h-[15px] px-px">
      <button type="button" aria-label="Rolar para a esquerda" className="flex w-[17px] items-center justify-center border border-[#999] bg-white">
        <Svg w={5} h={8} box="0 0 5 8"><path d="M5 0v8L0 4z" fill="#666" /></Svg>
      </button>
      <div className={clsx(thumb, "border border-[#999] bg-white")} />
      <button type="button" aria-label="Rolar para a direita" className="ml-auto flex w-4 items-center justify-center border border-[#999] bg-white">
        <Svg w={5} h={8} box="0 0 5 8"><path d="M0 0v8l5-4z" fill="#666" /></Svg>
      </button>
    </div>
  );
}

const Total = ({ className, children }: { className: string; children: ReactNode }) => (
  <div className={clsx(className, "flex h-6 items-center justify-end border border-[#c6c6c6] bg-white pr-[5px]")}>{children}</div>
);

function ContractPanel() {
  return (
    <section className="flex min-w-0 flex-1 flex-col bg-white">
      <div className="flex pt-px">
        <div className="min-w-0 flex-1">
          <MainToolbar page="1/4">
            <Tool label="Processos"><ExchangeIcon /></Tool>
            <Sep />
            <Tool label="Anexos" className="ml-[312px] w-4"><Caret /></Tool>
            <Tool label="Ajuda"><BookIcon /></Tool>
          </MainToolbar>
          <LayoutToolbar pressed={[true, true, true, false]} />
        </div>
        <button type="button" aria-label="Vídeos" className="flex h-[34px] items-center gap-1 pr-1">
          <Svg w={20} h={14} box="0 0 20 14">
            <rect width="20" height="14" rx="3" fill={TEAL} />
            <path d="M8 4.500v5l4.500-2.500z" fill="#fff" />
          </Svg>
          <Caret />
        </button>
      </div>
      <GroupBand />
      <div className="min-h-0 flex-1"><ContractTable /></div>
      <footer className="flex h-[53px] flex-col justify-between border-t border-[#c6c6c6] bg-[#efefef] pt-[6px] pb-px">
        <Total className="ml-6 w-[38px]">0</Total>
        <ScrollBar thumb="w-[188px]" />
      </footer>
    </section>
  );
}

const dockTabs: [string, string, boolean][] = [
  ["Períodos do contrato", "w-[148px]", false],
  ["Aditivos Contratuais", "w-[143px]", true],
  ["Detalhamento de Aditivo", "w-[171px]", false],
];

function AttachmentDock() {
  return (
    <aside className="my-[2px] mr-px ml-[2px] flex w-[848px] shrink-0 flex-col border border-[#c6c6c6] bg-white">
      <div className="flex h-[23px] shrink-0 items-center gap-[10px] border-b border-[#c6c6c6] bg-[#cddaf3] pr-[6px] pl-[6px]">
        <h2 className="flex-1 font-bold">Anexos</h2>
        <button type="button" aria-label="Fixar" className="flex">
          <Svg w={10} box="0 0 10 10"><path d="M2.500.5h5M3.500.5v5M6.500.5v5M1 5.500h8M5 5.500V10" stroke="#555" /></Svg>
        </button>
        <button type="button" aria-label="Fechar" className="flex">
          <Svg w={10} box="0 0 10 10"><path d="m1 1 8 8M9 1 1 9" stroke="#555" /></Svg>
        </button>
      </div>
      <div className="mx-[2px] mb-px flex min-h-0 flex-1 flex-col pt-[2px]">
        <div className="flex h-[22px] shrink-0" role="tablist">
          {dockTabs.map(([name, width, active]) => (
            <button
              key={name}
              type="button"
              role="tab"
              aria-selected={active}
              className={clsx(width, "-mr-px shrink-0 rounded-t-[4px] border border-[#999]", active && "border-b-white")}
            >
              {name}
            </button>
          ))}
          <span className="flex-1 border-b border-[#999]" />
        </div>
        <div className="flex min-h-0 flex-1 flex-col border border-t-0 border-[#999] px-px pt-px pb-[2px]">
          <div className="border-t border-[#999]">
            <MainToolbar page="1/2">
              <Tool label="Processos" className="w-8"><GearIcon /></Tool>
              <Caret />
              <Sep />
              <Tool label="Filtro" className="w-8"><FilterIcon /></Tool>
              <Caret />
            </MainToolbar>
            <LayoutToolbar pressed={[true, false, true, true]}>
              <span className="w-[26px] text-center text-[8px] font-black text-[#1683a8] italic">ABC</span>
            </LayoutToolbar>
          </div>
          <GroupBand />
          <div className="min-h-0 flex-1"><AddendumTable /></div>
          <footer className="flex h-[54px] flex-col justify-between border-t border-[#c6c6c6] bg-[#efefef] pt-[6px] pb-px">
            <div className="flex">
              <Total className="mr-[223px] ml-6 w-[38px]">0</Total>
              <Total className="w-[129px]">Soma=39.900,0000</Total>
            </div>
            <ScrollBar thumb="w-[76%]" />
          </footer>
        </div>
      </div>
    </aside>
  );
}

/* ---------- Context menu ---------- */

type MenuEntry = { text: string; icon?: ReactNode; sub?: boolean; disabled?: boolean; active?: boolean } | null;

const menu: MenuEntry[] = [
  { text: "Fluxo de trabalho", icon: <FlowIcon />, sub: true },
  { text: "GED", icon: <GedIcon />, sub: true },
  { text: "Gráficos", icon: <ChartIcon />, sub: true },
  { text: "Consultas SQL", icon: <SearchIcon color="#6bbbd4" />, sub: true },
  { text: "Relatórios", icon: <DocIcon lines="#8cc7d6" />, sub: true },
  { text: "Mapa", icon: <PinIcon />, sub: true },
  null,
  { text: "Períodos do contrato", icon: <PeriodIcon /> },
  { text: "Histórico do contrato" },
  { text: "Faturamento Direto", sub: true },
  { text: "Departamentos do contrato" },
  { text: "Centros de custo do contrato" },
  { text: "Estado/municípios do contrato" },
  { text: "Aditivos Contratuais", icon: <PageIcon d={PAGE_PLUS} /> },
  { text: "Itens do Contrato", icon: <PageIcon d={PAGE_LINES} /> },
  { text: "Reajustes do Item Associado" },
  { text: "Produtos Faturados no Contrato" },
  null,
  { text: "Objetos do Contrato", icon: <ObjectIcon />, disabled: true },
  null,
  { text: "Adiantamento de Contrato" },
  null,
  { text: "Vínculo de Contratos" },
  { text: "Controle de Liberação", disabled: true },
  null,
  { text: "Itens Medidos" },
  null,
  { text: "Detalhamento de Aditivo", active: true },
  null,
  { text: "Retenções Contratuais", icon: <RetentionIcon /> },
  { text: "Reajustes do Objeto Associado", disabled: true },
  { text: "Movimento de Origem" },
  null,
  { text: "Cliente/Fornecedor Participantes do Contrato" },
  { text: "Contatos do Contrato" },
  null,
  { text: "Configurar Anexos" },
  null,
  { text: "Fechar Anexo" },
  { text: "Fechar Todos os Anexos" },
];

function AttachmentMenu() {
  return (
    <div
      role="menu"
      className="absolute top-[176px] left-[414px] flex w-[316px] flex-col border border-[#999] bg-white p-[2px] text-[12px] text-black shadow-[3px_3px_3px_rgba(0,0,0,0.5)]"
    >
      {menu.map((entry, i) =>
        entry ? (
          <button
            key={entry.text}
            type="button"
            role="menuitem"
            disabled={entry.disabled}
            className={clsx(
              "flex h-[25px] shrink-0 items-center pr-[7px] pl-1 text-left",
              entry.active && "bg-[#dbe7fb]",
              entry.disabled && "text-[#7a7a7a]"
            )}
          >
            <span className="w-[22px]">{entry.icon}</span>
            <span className="flex-1">{entry.text}</span>
            {entry.sub && <Svg w={5} h={8} box="0 0 5 8"><path d="M0 0v8l5-4z" fill="#000" /></Svg>}
          </button>
        ) : (
          <hr key={i} className="mx-1 mt-1 mb-[5px] border-[#999]" />
        )
      )}
    </div>
  );
}

const bottomTabs: [string, string, ReactNode][] = [
  ["Sistema", "w-[69px]", (
    <Svg w={14} key="s" box="0 0 16 16">
      <rect x="1" y="2" width="14" height="9" rx="1" fill="#fff" stroke={DARK} strokeWidth="1.400" />
      <path d="M4.500 4.500h7v4h-7zM8 11v3.500M4 14.500h8" stroke={DARK} />
      <path d="M5 6.500h6" stroke={TEAL} strokeWidth="2" />
    </Svg>
  )],
  ["Aplicação", "w-[77px]", (
    <Svg w={14} key="a" box="0 0 16 16">
      <path d="m4 3h8l3 4H1z" fill={TEAL} stroke={DARK} />
      <rect x="1" y="7" width="14" height="6.500" rx="1" fill="#fff" stroke={DARK} strokeWidth="1.400" />
      <path d="M8 10.500h1.500M11 10.500h1.500" stroke={DARK} strokeWidth="1.500" />
    </Svg>
  )],
  ["Mensagens", "w-[86px]", (
    <Svg w={14} key="m" box="0 0 16 16">
      <path d="M1 2h14v10H7l-3 3v-3H1z" fill="#fff" stroke={DARK} strokeWidth="1.200" />
      <path d="M3.500 5h9M3.500 7h7M3.500 9.500h5" stroke="#5bb6cf" strokeWidth="1.500" />
    </Svg>
  )],
];

export default function App() {
  return (
    <div className="relative flex h-screen flex-col overflow-hidden bg-[#efefef] font-[Roboto,sans-serif] text-[11px] leading-[14px] text-[#222]">
      <TitleBar />
      <Ribbon />
      <ProjectBar />

      <main className="flex min-h-0 flex-1">
        <div className="mr-[3px] flex min-w-0 flex-1 flex-col pl-px">
          <div className="flex h-[31px] shrink-0 items-end">
            <div className="-mb-px flex h-6 w-[139px] items-center justify-between border border-b-0 border-[#999] bg-[#efefef] pr-2 pl-[6px]">
              Contrato - 03.9.0513
              <button type="button" aria-label="Fechar aba" className="flex">
                <Svg w={7} box="0 0 7 7"><path d="m.5.5 6 6M6.500.5l-6 6" stroke="#555" strokeWidth="1.200" /></Svg>
              </button>
            </div>
          </div>
          <div className="flex min-h-0 flex-1 border border-[#999]">
            <ContractPanel />
            <AttachmentDock />
          </div>
        </div>
        <button type="button" className="mt-[11px] flex h-[75px] w-[21px] shrink-0 flex-col items-center gap-[2px] border border-r-0 border-[#c0c0c0] bg-[#dadada] pt-[6px]">
          <Svg>
            <circle cx="8" cy="8" r="5.800" fill="#fff" stroke={DARK} strokeWidth="2.600" strokeDasharray="3.300 1.250" />
            <circle cx="8" cy="8" r="5" fill="#fff" stroke={DARK} />
            <circle cx="8" cy="8" r="3" fill={TEAL} />
            <circle cx="8" cy="8" r="1" fill="#fff" />
          </Svg>
          <span className="leading-[12px] [writing-mode:vertical-rl]">Executar</span>
        </button>
      </main>

      <footer className="flex h-[27px] shrink-0 gap-1 border-b-2 border-[#b4cdd6] pt-[3px] pl-1">
        {bottomTabs.map(([name, width, icon]) => (
          <button key={name} type="button" className={clsx(width, "flex items-center justify-center gap-[3px] border border-b-0 border-[#c6c6c6] bg-[#dadada]")}>
            {icon}
            {name}
          </button>
        ))}
      </footer>

      <AttachmentMenu />
      <svg width="13" height="20" viewBox="0 0 13 20" className="absolute top-[784px] left-[603px]" aria-hidden="true">
        <path d="M1 1v15.500l3.500-3.300 2.400 5.600 2.400-1-2.400-5.500H12z" fill="#fff" stroke="#222" />
      </svg>
    </div>
  );
}
